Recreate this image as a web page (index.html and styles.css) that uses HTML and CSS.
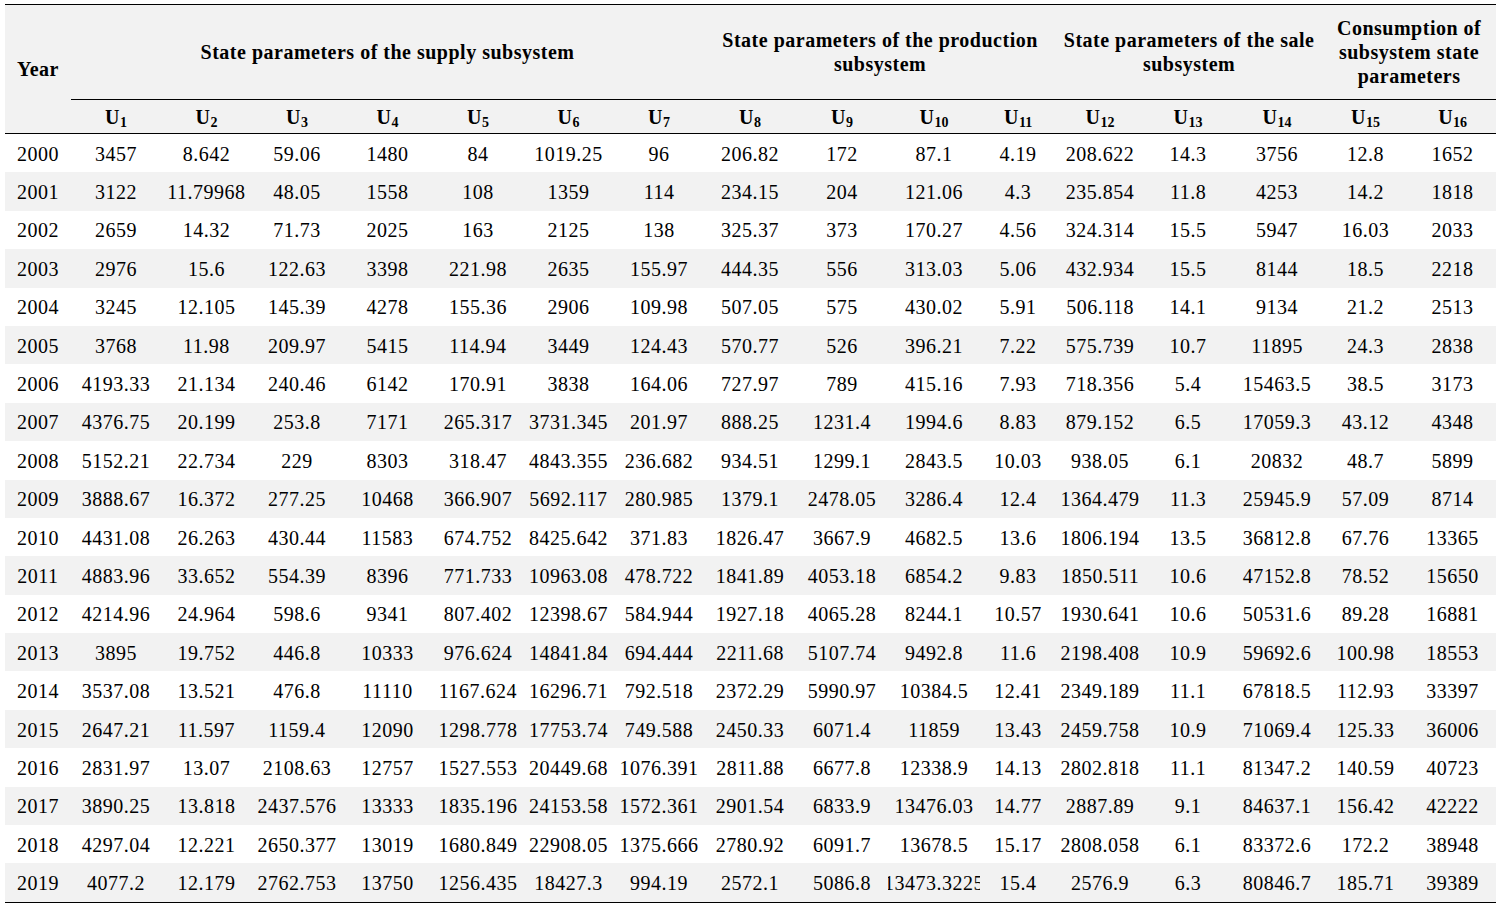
FILE: index.html
```html
<!DOCTYPE html>
<html lang="en">
<head>
<meta charset="utf-8">
<title>State parameters</title>
<link rel="stylesheet" href="styles.css">
</head>
<body>
<table class="data">
<colgroup>
<col class="c-year">
<col class="c90"><col class="c91"><col class="c90"><col class="c91"><col class="c90"><col class="c91"><col class="c90">
<col class="c92"><col class="c92"><col class="c92"><col class="c76">
<col class="c88"><col class="c88"><col class="c90">
<col class="c87"><col class="c87">
</colgroup>
<thead>
<tr class="h-group">
<th rowspan="2" class="year-head">Year</th>
<th colspan="7" class="group">State parameters of the supply subsystem</th>
<th colspan="4" class="group">State parameters of the production<br>subsystem</th>
<th colspan="3" class="group">State parameters of the sale<br>subsystem</th>
<th colspan="2" class="group">Consumption of<br>subsystem state<br>parameters</th>
</tr>
<tr class="h-vars">
<th>U<span class="sub">1</span></th><th>U<span class="sub">2</span></th><th>U<span class="sub">3</span></th><th>U<span class="sub">4</span></th><th>U<span class="sub">5</span></th><th>U<span class="sub">6</span></th><th>U<span class="sub">7</span></th><th>U<span class="sub">8</span></th><th>U<span class="sub">9</span></th><th>U<span class="sub">10</span></th><th>U<span class="sub">11</span></th><th>U<span class="sub">12</span></th><th>U<span class="sub">13</span></th><th>U<span class="sub">14</span></th><th>U<span class="sub">15</span></th><th>U<span class="sub">16</span></th>
</tr>
</thead>
<tbody>
<tr><td>2000</td><td>3457</td><td>8.642</td><td>59.06</td><td>1480</td><td>84</td><td>1019.25</td><td>96</td><td>206.82</td><td>172</td><td>87.1</td><td>4.19</td><td>208.622</td><td>14.3</td><td>3756</td><td>12.8</td><td>1652</td></tr>
<tr><td>2001</td><td>3122</td><td>11.79968</td><td>48.05</td><td>1558</td><td>108</td><td>1359</td><td>114</td><td>234.15</td><td>204</td><td>121.06</td><td>4.3</td><td>235.854</td><td>11.8</td><td>4253</td><td>14.2</td><td>1818</td></tr>
<tr><td>2002</td><td>2659</td><td>14.32</td><td>71.73</td><td>2025</td><td>163</td><td>2125</td><td>138</td><td>325.37</td><td>373</td><td>170.27</td><td>4.56</td><td>324.314</td><td>15.5</td><td>5947</td><td>16.03</td><td>2033</td></tr>
<tr><td>2003</td><td>2976</td><td>15.6</td><td>122.63</td><td>3398</td><td>221.98</td><td>2635</td><td>155.97</td><td>444.35</td><td>556</td><td>313.03</td><td>5.06</td><td>432.934</td><td>15.5</td><td>8144</td><td>18.5</td><td>2218</td></tr>
<tr><td>2004</td><td>3245</td><td>12.105</td><td>145.39</td><td>4278</td><td>155.36</td><td>2906</td><td>109.98</td><td>507.05</td><td>575</td><td>430.02</td><td>5.91</td><td>506.118</td><td>14.1</td><td>9134</td><td>21.2</td><td>2513</td></tr>
<tr><td>2005</td><td>3768</td><td>11.98</td><td>209.97</td><td>5415</td><td>114.94</td><td>3449</td><td>124.43</td><td>570.77</td><td>526</td><td>396.21</td><td>7.22</td><td>575.739</td><td>10.7</td><td>11895</td><td>24.3</td><td>2838</td></tr>
<tr><td>2006</td><td>4193.33</td><td>21.134</td><td>240.46</td><td>6142</td><td>170.91</td><td>3838</td><td>164.06</td><td>727.97</td><td>789</td><td>415.16</td><td>7.93</td><td>718.356</td><td>5.4</td><td>15463.5</td><td>38.5</td><td>3173</td></tr>
<tr><td>2007</td><td>4376.75</td><td>20.199</td><td>253.8</td><td>7171</td><td>265.317</td><td>3731.345</td><td>201.97</td><td>888.25</td><td>1231.4</td><td>1994.6</td><td>8.83</td><td>879.152</td><td>6.5</td><td>17059.3</td><td>43.12</td><td>4348</td></tr>
<tr><td>2008</td><td>5152.21</td><td>22.734</td><td>229</td><td>8303</td><td>318.47</td><td>4843.355</td><td>236.682</td><td>934.51</td><td>1299.1</td><td>2843.5</td><td>10.03</td><td>938.05</td><td>6.1</td><td>20832</td><td>48.7</td><td>5899</td></tr>
<tr><td>2009</td><td>3888.67</td><td>16.372</td><td>277.25</td><td>10468</td><td>366.907</td><td>5692.117</td><td>280.985</td><td>1379.1</td><td>2478.05</td><td>3286.4</td><td>12.4</td><td>1364.479</td><td>11.3</td><td>25945.9</td><td>57.09</td><td>8714</td></tr>
<tr><td>2010</td><td>4431.08</td><td>26.263</td><td>430.44</td><td>11583</td><td>674.752</td><td>8425.642</td><td>371.83</td><td>1826.47</td><td>3667.9</td><td>4682.5</td><td>13.6</td><td>1806.194</td><td>13.5</td><td>36812.8</td><td>67.76</td><td>13365</td></tr>
<tr><td>2011</td><td>4883.96</td><td>33.652</td><td>554.39</td><td>8396</td><td>771.733</td><td>10963.08</td><td>478.722</td><td>1841.89</td><td>4053.18</td><td>6854.2</td><td>9.83</td><td>1850.511</td><td>10.6</td><td>47152.8</td><td>78.52</td><td>15650</td></tr>
<tr><td>2012</td><td>4214.96</td><td>24.964</td><td>598.6</td><td>9341</td><td>807.402</td><td>12398.67</td><td>584.944</td><td>1927.18</td><td>4065.28</td><td>8244.1</td><td>10.57</td><td>1930.641</td><td>10.6</td><td>50531.6</td><td>89.28</td><td>16881</td></tr>
<tr><td>2013</td><td>3895</td><td>19.752</td><td>446.8</td><td>10333</td><td>976.624</td><td>14841.84</td><td>694.444</td><td>2211.68</td><td>5107.74</td><td>9492.8</td><td>11.6</td><td>2198.408</td><td>10.9</td><td>59692.6</td><td>100.98</td><td>18553</td></tr>
<tr><td>2014</td><td>3537.08</td><td>13.521</td><td>476.8</td><td>11110</td><td>1167.624</td><td>16296.71</td><td>792.518</td><td>2372.29</td><td>5990.97</td><td>10384.5</td><td>12.41</td><td>2349.189</td><td>11.1</td><td>67818.5</td><td>112.93</td><td>33397</td></tr>
<tr><td>2015</td><td>2647.21</td><td>11.597</td><td>1159.4</td><td>12090</td><td>1298.778</td><td>17753.74</td><td>749.588</td><td>2450.33</td><td>6071.4</td><td>11859</td><td>13.43</td><td>2459.758</td><td>10.9</td><td>71069.4</td><td>125.33</td><td>36006</td></tr>
<tr><td>2016</td><td>2831.97</td><td>13.07</td><td>2108.63</td><td>12757</td><td>1527.553</td><td>20449.68</td><td>1076.391</td><td>2811.88</td><td>6677.8</td><td>12338.9</td><td>14.13</td><td>2802.818</td><td>11.1</td><td>81347.2</td><td>140.59</td><td>40723</td></tr>
<tr><td>2017</td><td>3890.25</td><td>13.818</td><td>2437.576</td><td>13333</td><td>1835.196</td><td>24153.58</td><td>1572.361</td><td>2901.54</td><td>6833.9</td><td>13476.03</td><td>14.77</td><td>2887.89</td><td>9.1</td><td>84637.1</td><td>156.42</td><td>42222</td></tr>
<tr><td>2018</td><td>4297.04</td><td>12.221</td><td>2650.377</td><td>13019</td><td>1680.849</td><td>22908.05</td><td>1375.666</td><td>2780.92</td><td>6091.7</td><td>13678.5</td><td>15.17</td><td>2808.058</td><td>6.1</td><td>83372.6</td><td>172.2</td><td>38948</td></tr>
<tr><td>2019</td><td>4077.2</td><td>12.179</td><td>2762.753</td><td>13750</td><td>1256.435</td><td>18427.3</td><td>994.19</td><td>2572.1</td><td>5086.8</td><td><div class="clip"><span>13473.3225</span></div></td><td>15.4</td><td>2576.9</td><td>6.3</td><td>80846.7</td><td>185.71</td><td>39389</td></tr>
</tbody>
</table>
</body>
</html>
```
FILE: styles.css
```css
html, body {
  margin: 0;
  padding: 0;
  background: #ffffff;
}

.data {
  margin: 4px 0 0 5px;
  width: 1491px;
  table-layout: fixed;
  border-collapse: separate;
  border-spacing: 0;
  border-top: 1px solid #000;
  border-bottom: 1px solid #000;
  font-family: "Liberation Serif", "Times New Roman", serif;
  color: #000;
}

.c-year { width: 66px; }
.c90 { width: 90px; }
.c91 { width: 91px; }
.c92 { width: 92px; }
.c76 { width: 76px; }
.c88 { width: 88px; }
.c87 { width: 87px; }

.data th,
.data td {
  padding: 0;
  text-align: center;
  vertical-align: middle;
  white-space: nowrap;
  overflow: hidden;
}

.data thead {
  background: #f2f2f2;
}

.data th {
  font-weight: bold;
  font-size: 20px;
  letter-spacing: 0.5px;
}

.h-group {
  height: 95px;
}

.group {
  line-height: 24px;
  padding-top: 2px;
  border-bottom: 1px solid #000;
}

.year-head {
  padding-top: 2px;
  border-bottom: 1px solid #000;
}

.h-vars {
  height: 34px;
}

.h-vars th {
  border-bottom: 1px solid #000;
  padding-top: 4px;
}

.sub {
  font-size: 14px;
  vertical-align: -3px;
  letter-spacing: 0;
}

.data td {
  font-size: 20px;
  letter-spacing: 0.5px;
  padding-top: 2px;
}

.data tbody tr {
  height: 38.4px;
}

.data tbody tr:nth-child(even) {
  background: #f2f2f2;
}

.clip {
  display: flex;
  justify-content: center;
  overflow: hidden;
}
```
